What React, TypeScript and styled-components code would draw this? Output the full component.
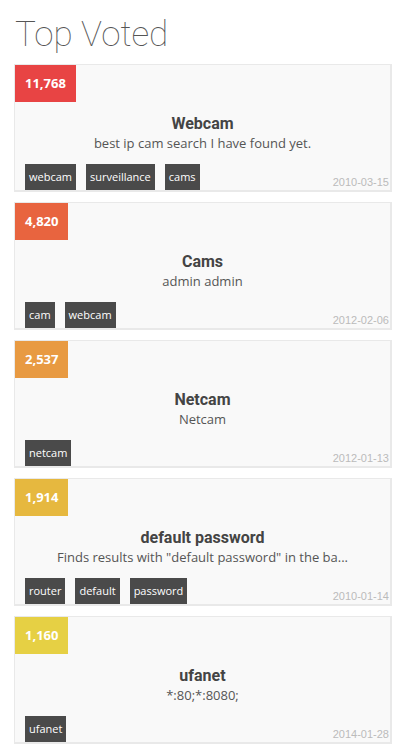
import React from "react";
import styled, { createGlobalStyle } from "styled-components";

const Global = createGlobalStyle`
  html, body { margin: 0; padding: 0; background: #fff; }
  body { font-family: "Open Sans", "Liberation Sans", sans-serif; }
`;

const Page = styled.div`
  padding: 0 15px 0 14px;
`;

const Heading = styled.h1`
  margin: 0;
  padding-top: 15px;
  height: 64px;
  box-sizing: border-box;
  font-family: Roboto, "Open Sans", sans-serif;
  font-weight: 100;
  font-size: 35px;
  line-height: 40px;
  color: #555;
  padding-left: 1px;
`;

const List = styled.div`
  display: flex;
  flex-direction: column;
  gap: 10px;
`;

const Card = styled.div`
  background: #f9f9f9;
  border: 1px solid #e9e9e9;
  border-width: 1px 2px 2px 1px;
  height: 128px;
  box-sizing: border-box;
  display: flex;
  flex-direction: column;
`;

const Badge = styled.div<{ $color: string }>`
  align-self: flex-start;
  background: ${(p) => p.$color};
  color: #fff;
  font-family: "Open Sans", sans-serif;
  font-weight: 700;
  font-size: 13px;
  height: 37px;
  line-height: 37px;
  padding: 0 10px;
`;

const Body = styled.div`
  text-align: center;
  padding-top: 12px;
  flex: 1;
`;

const Title = styled.div`
  font-family: Roboto, sans-serif;
  font-weight: 700;
  font-size: 16px;
  line-height: 20px;
  color: #444;
`;

const Desc = styled.div`
  font-family: "Open Sans", sans-serif;
  font-size: 13px;
  line-height: 18px;
  color: #555;
  white-space: nowrap;
`;

const Footer = styled.div`
  display: flex;
  justify-content: space-between;
  align-items: flex-end;
  padding: 0 1px 0 10px;
`;

const Tags = styled.div`
  display: flex;
  gap: 10px;
`;

const Tag = styled.span`
  background: #4a4a4a;
  color: #fff;
  font-family: "Open Sans", sans-serif;
  font-size: 11px;
  height: 26px;
  line-height: 26px;
  padding: 0 4px;
`;

const DateText = styled.span`
  font-family: "Liberation Sans", Arial, sans-serif;
  font-size: 11px;
  color: #bbb;
  line-height: 16px;
`;

const items = [
  { votes: "11,768", color: "#e84444", title: "Webcam", desc: "best ip cam search I have found yet.", tags: ["webcam", "surveillance", "cams"], date: "2010-03-15" },
  { votes: "4,820", color: "#e8643f", title: "Cams", desc: "admin admin", tags: ["cam", "webcam"], date: "2012-02-06" },
  { votes: "2,537", color: "#e89a42", title: "Netcam", desc: "Netcam", tags: ["netcam"], date: "2012-01-13" },
  { votes: "1,914", color: "#e6b83f", title: "default password", desc: 'Finds results with "default password" in the ba...', tags: ["router", "default", "password"], date: "2010-01-14" },
  { votes: "1,160", color: "#e6d044", title: "ufanet", desc: "*:80;*:8080;", tags: ["ufanet"], date: "2014-01-28" },
];

export default function App() {
  return (
    <>
      <Global />
      <Page>
        <Heading>Top Voted</Heading>
        <List>
          {items.map((it) => (
            <Card key={it.title}>
              <Badge $color={it.color}>{it.votes}</Badge>
              <Body>
                <Title>{it.title}</Title>
                <Desc>{it.desc}</Desc>
              </Body>
              <Footer>
                <Tags>
                  {it.tags.map((t) => (
                    <Tag key={t}>{t}</Tag>
                  ))}
                </Tags>
                <DateText>{it.date}</DateText>
              </Footer>
            </Card>
          ))}
        </List>
      </Page>
    </>
  );
}
